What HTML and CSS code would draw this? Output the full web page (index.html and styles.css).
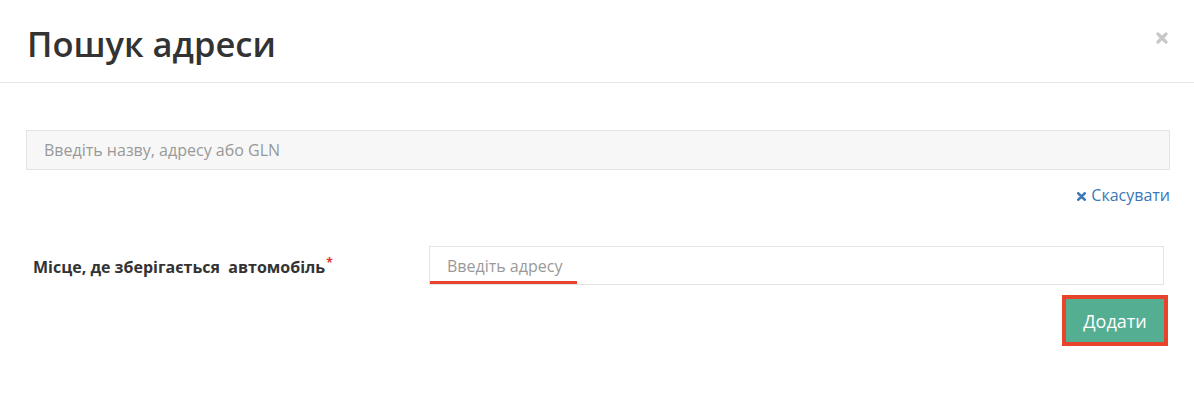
FILE: index.html
```html
<!DOCTYPE html>
<html lang="uk">
<head>
    <meta charset="UTF-8">
    <meta name="viewport" content="width=device-width, initial-scale=1.0">
    <title>Пошук адреси</title>
    <link rel="stylesheet" href="styles.css">
</head>
<body>
    <div class="modal">
        <div class="modal-header">
            <h1 class="modal-title">Пошук адреси</h1>
            <button class="close" type="button" aria-label="Закрити">
                <svg width="12" height="12" viewBox="0 0 12 12"><path d="M2 2 L10 10 M10 2 L2 10" stroke="currentColor" stroke-width="3.2" stroke-linecap="round"/></svg>
            </button>
        </div>
        <div class="modal-body">
            <input class="search" type="text" placeholder="Введіть назву, адресу або GLN">
            <div class="cancel-row">
                <a class="cancel" href="#">
                    <svg width="9" height="9" viewBox="0 0 9 9"><path d="M1.3 1.3 L7.7 7.7 M7.7 1.3 L1.3 7.7" stroke="currentColor" stroke-width="2.6" stroke-linecap="round"/></svg>
                    Скасувати
                </a>
            </div>
            <div class="form-row">
                <label class="field-label">Місце, де зберігається&nbsp; автомобіль<span class="req">*</span></label>
                <input class="address" type="text" placeholder="Введіть адресу">
            </div>
            <div class="actions">
                <button class="btn-add" type="button">Додати</button>
            </div>
        </div>
    </div>
</body>
</html>
```

FILE: styles.css
```css
body{
    margin: 0;
    background: #fff;
    font-family: "Open Sans", "Noto Sans", sans-serif;
    color: #333;
}
.modal-header{
    display: flex;
    justify-content: space-between;
    align-items: flex-start;
    padding: 19px 26px 14px 27px;
    border-bottom: 1px solid #e5e5e5;
}
.modal-title{
    margin: 0;
    font-size: 34.5px;
    font-weight: 600;
    line-height: 49px;
    color: #333;
}
.close{
    margin-top: 13px;
    padding: 0;
    border: 0;
    background: none;
    color: #c8c8c8;
    line-height: 0;
    cursor: pointer;
}
.modal-body{
    padding: 47px 24px 0 26px;
}
.search{
    display: block;
    box-sizing: border-box;
    width: 100%;
    height: 40px;
    padding: 0 17px;
    border: 1px solid #e3e3e3;
    background: #f7f7f7;
    font-family: inherit;
    font-size: 16px;
    color: #555;
    outline: none;
}
.search::placeholder,
.address::placeholder{
    color: #999;
}
.cancel-row{
    margin-top: 15px;
    text-align: right;
    line-height: 20px;
}
.cancel{
    color: #3a78b8;
    font-size: 16px;
    text-decoration: none;
}
.cancel svg{
    margin-right: 1px;
}
.form-row{
    display: grid;
    grid-template-columns: 403px 1fr;
    align-items: center;
    margin-top: 41px;
    margin-right: 6px;
}
.field-label{
    padding-left: 7px;
    padding-top: 3px;
    font-size: 16px;
    font-weight: 700;
    color: #333;
}
.req{
    position: relative;
    top: -6px;
    margin-left: 1px;
    font-size: 12px;
    color: #e0312f;
}
.address{
    display: block;
    box-sizing: border-box;
    width: 100%;
    height: 39px;
    padding: 0 17px;
    border: 1px solid #e3e3e3;
    background: #fff linear-gradient(#e8432b, #e8432b) no-repeat left bottom / 148px 4px;
    background-origin: border-box;
    font-family: inherit;
    font-size: 16px;
    color: #555;
    outline: none;
}
.actions{
    margin-top: 10px;
    margin-right: 2px;
    text-align: right;
}
.btn-add{
    width: 106px;
    height: 51px;
    padding: 0;
    border: 4px solid #e8432b;
    background: #54ae92;
    color: #fff;
    font-family: inherit;
    font-size: 18px;
    cursor: pointer;
}
```
